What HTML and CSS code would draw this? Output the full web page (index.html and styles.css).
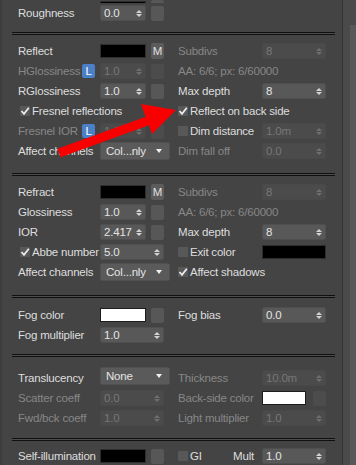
FILE: index.html
```html
<!DOCTYPE html>
<html lang="en">
<head>
    <meta charset="UTF-8">
    <meta name="viewport" content="width=device-width, initial-scale=1.0">
    <title>Material parameters</title>
    <link rel="stylesheet" href="styles.css">
</head>
<body>
    <div class="panel">
        <div class="row cut">
            <span></span>
            <div class="ctl"><span class="sw"></span><span class="sq"></span></div>
        </div>
        <div class="row">
            <span class="lbl">Roughness</span>
            <div class="ctl"><span class="spin"><span>0.0</span><i class="arr"></i></span><span class="sq"></span></div>
        </div>

        <div class="line"></div>

        <div class="sec reflect">
            <div class="row">
                <span class="lbl">Reflect</span>
                <div class="ctl"><span class="sw"></span><span class="btn-m">M</span></div>
                <span class="lbl off">Subdivs</span>
                <span class="spin wide off"><span>8</span><i class="arr"></i></span>
            </div>
            <div class="row">
                <span class="lbl off tag">HGlossiness<b class="badge">L</b></span>
                <div class="ctl"><span class="spin off"><span>1.0</span><i class="arr"></i></span><span class="sq off"></span></div>
                <span class="lbl off span-r">AA: 6/6; px: 6/60000</span>
            </div>
            <div class="row">
                <span class="lbl">RGlossiness</span>
                <div class="ctl"><span class="spin"><span>1.0</span><i class="arr"></i></span><span class="sq"></span></div>
                <span class="lbl">Max depth</span>
                <span class="spin wide"><span>8</span><i class="arr"></i></span>
            </div>
            <div class="row">
                <div class="check span-l"><span class="chk on"><svg viewBox="0 0 10 10"><path d="M1.5 5 L4 7.8 L8.8 1.8"/></svg></span><span>Fresnel reflections</span></div>
                <div class="check span-r"><span class="chk on"><svg viewBox="0 0 10 10"><path d="M1.5 5 L4 7.8 L8.8 1.8"/></svg></span><span>Reflect on back side</span></div>
            </div>
            <div class="row">
                <span class="lbl off tag">Fresnel IOR<b class="badge">L</b></span>
                <div class="ctl"><span class="spin off"><span>1.6</span><i class="arr"></i></span><span class="sq off"></span></div>
                <div class="check"><span class="chk"></span><span>Dim distance</span></div>
                <span class="spin wide off"><span>1.0m</span><i class="arr"></i></span>
            </div>
            <div class="row">
                <span class="lbl">Affect channels</span>
                <div class="ctl"><span class="drop"><span>Col...nly</span></span></div>
                <span class="lbl off">Dim fall off</span>
                <span class="spin wide off"><span>0.0</span><i class="arr"></i></span>
            </div>
        </div>

        <div class="line"></div>

        <div class="sec refract">
            <div class="row">
                <span class="lbl">Refract</span>
                <div class="ctl"><span class="sw"></span><span class="btn-m">M</span></div>
                <span class="lbl off">Subdivs</span>
                <span class="spin wide off"><span>8</span><i class="arr"></i></span>
            </div>
            <div class="row">
                <span class="lbl">Glossiness</span>
                <div class="ctl"><span class="spin"><span>1.0</span><i class="arr"></i></span><span class="sq"></span></div>
                <span class="lbl off span-r">AA: 6/6; px: 6/60000</span>
            </div>
            <div class="row">
                <span class="lbl">IOR</span>
                <div class="ctl"><span class="spin"><span>2.417</span><i class="arr"></i></span><span class="sq"></span></div>
                <span class="lbl">Max depth</span>
                <span class="spin wide"><span>8</span><i class="arr"></i></span>
            </div>
            <div class="row">
                <div class="check"><span class="chk on"><svg viewBox="0 0 10 10"><path d="M1.5 5 L4 7.8 L8.8 1.8"/></svg></span><span>Abbe number</span></div>
                <div class="ctl"><span class="spin wide"><span>5.0</span><i class="arr"></i></span></div>
                <div class="check"><span class="chk"></span><span>Exit color</span></div>
                <span class="sw wide"></span>
            </div>
            <div class="row">
                <span class="lbl">Affect channels</span>
                <div class="ctl"><span class="drop"><span>Col...nly</span></span></div>
                <div class="check span-r"><span class="chk on"><svg viewBox="0 0 10 10"><path d="M1.5 5 L4 7.8 L8.8 1.8"/></svg></span><span>Affect shadows</span></div>
            </div>
        </div>

        <div class="line"></div>

        <div class="sec fog">
            <div class="row">
                <span class="lbl">Fog color</span>
                <div class="ctl"><span class="sw white"></span><span class="sq"></span></div>
                <span class="lbl">Fog bias</span>
                <span class="spin wide"><span>0.0</span><i class="arr"></i></span>
            </div>
            <div class="row">
                <span class="lbl">Fog multiplier</span>
                <div class="ctl"><span class="spin wide"><span>1.0</span><i class="arr"></i></span></div>
            </div>
        </div>

        <div class="line"></div>

        <div class="sec transl">
            <div class="row">
                <span class="lbl">Translucency</span>
                <div class="ctl"><span class="drop up"><span>None</span></span></div>
                <span class="lbl off">Thickness</span>
                <span class="spin wide off"><span>10.0m</span><i class="arr"></i></span>
            </div>
            <div class="row">
                <span class="lbl off">Scatter coeff</span>
                <div class="ctl"><span class="spin wide off"><span>0.0</span><i class="arr"></i></span></div>
                <span class="lbl off">Back-side color</span>
                <div class="ctl wide-gap"><span class="sw white mid"></span><span class="sq off"></span></div>
            </div>
            <div class="row">
                <span class="lbl off">Fwd/bck coeff</span>
                <div class="ctl"><span class="spin wide off"><span>1.0</span><i class="arr"></i></span></div>
                <span class="lbl off">Light multiplier</span>
                <span class="spin wide off"><span>1.0</span><i class="arr"></i></span>
            </div>
        </div>

        <div class="line"></div>

        <div class="sec selfillum">
            <div class="row">
                <span class="lbl">Self-illumination</span>
                <div class="ctl"><span class="sw"></span><span class="sq"></span></div>
                <div class="check"><span class="chk"></span><span>GI</span><span class="mult">Mult</span></div>
                <span class="spin wide"><span>1.0</span><i class="arr"></i></span>
            </div>
        </div>
    </div>
    <div class="scroll"><div class="thumb"></div></div>

    <svg class="arrow" width="356" height="465" viewBox="0 0 356 465">
        <line x1="59" y1="153" x2="150" y2="120" stroke="#f80000" stroke-width="9"/>
        <polygon points="141,104 176,110 152,134" fill="#f80000"/>
    </svg>
</body>
</html>
```

FILE: styles.css
```css
* {
    margin: 0;
    padding: 0;
    box-sizing: border-box;
}
body {
    width: 356px;
    height: 465px;
    overflow: hidden;
    position: relative;
    display: flex;
    background-color: #444444;
    font-family: "Liberation Sans", Arial, sans-serif;
    font-size: 11.5px;
    letter-spacing: -0.2px;
    color: #dedede;
}
.panel {
    width: 342px;
    border-left: 2px solid #3d3d3d;
}
.scroll {
    flex: 1;
    display: flex;
    justify-content: flex-end;
    border-left: 1px solid #343434;
    background-color: #4a4a4a;
}
.thumb {
    width: 6px;
    margin-top: 25px;
    background-color: #585858;
}
.row {
    display: grid;
    grid-template-columns: 82px 78px 84px 64px;
    align-items: center;
    height: 20px;
    margin-left: 16px;
    white-space: nowrap;
}
.cut {
    height: 3px;
    overflow: hidden;
    align-items: end;
}
.line {
    width: 323px;
    height: 3px;
    margin: 9px 0 6px 10px;
    border-top: 1px solid #101010;
    border-bottom: 1px solid #101010;
    background-color: #4c4c4c;
}
.reflect {
    padding-bottom: 3px;
}
.refract {
    padding-bottom: 4px;
}
.fog {
    padding-top: 1px;
}
.transl {
    padding-top: 5px;
    padding-bottom: 1px;
}
.selfillum {
    margin-top: -1px;
}
.off {
    color: #878787;
}
.tag {
    display: flex;
    align-items: center;
}
.badge {
    display: flex;
    align-items: center;
    justify-content: center;
    width: 13px;
    height: 14px;
    margin-left: auto;
    margin-right: 5px;
    border-radius: 2px;
    background-color: #4b80c6;
    color: #ffffff;
    font-weight: normal;
}
.span-l {
    grid-column: 1 / 3;
}
.span-r {
    grid-column: 3 / 5;
}
.ctl {
    display: flex;
    align-items: center;
    gap: 5px;
}
.wide-gap {
    gap: 7px;
}
.spin {
    display: flex;
    align-items: center;
    justify-content: space-between;
    width: 46px;
    height: 16px;
    padding: 0 3px 0 3px;
    border: 1px solid #4f4f4f;
    border-radius: 2px;
    background-color: #585858;
    color: #e4e4e4;
}
.spin.wide {
    width: 64px;
}
.spin.off {
    border-color: #494949;
    background-color: #4b4b4b;
    color: #777777;
}
.arr {
    display: flex;
    flex-direction: column;
    gap: 1px;
}
.arr::before,
.arr::after {
    content: "";
    border-left: 3px solid transparent;
    border-right: 3px solid transparent;
}
.arr::before {
    border-bottom: 3px solid #d2d2d2;
}
.arr::after {
    border-top: 3px solid #d2d2d2;
}
.spin.off .arr::before {
    border-bottom-color: #6e6e6e;
}
.spin.off .arr::after {
    border-top-color: #6e6e6e;
}
.sq {
    width: 13px;
    height: 15px;
    border-radius: 2px;
    background-color: #575757;
}
.sq.off {
    background-color: #4c4c4c;
}
.sw {
    width: 46px;
    height: 14px;
    border: 1px solid #2e2e2e;
    background-color: #000000;
}
.sw.wide {
    width: 64px;
}
.sw.mid {
    width: 44px;
}
.sw.white {
    border-color: #1c1c1c;
    background-color: #ffffff;
}
.btn-m {
    display: flex;
    align-items: center;
    justify-content: center;
    width: 13px;
    height: 16px;
    border-radius: 2px;
    background-color: #5c5c5c;
    color: #e0e0e0;
}
.drop {
    display: flex;
    align-items: center;
    justify-content: space-between;
    width: 70px;
    height: 18px;
    padding: 0 7px 0 5px;
    border: 1px solid #505050;
    border-radius: 2px;
    background-color: #5a5a5a;
    color: #e4e4e4;
}
.drop::after {
    content: "";
    border-left: 3px solid transparent;
    border-right: 3px solid transparent;
    border-top: 4px solid #f0f0f0;
}
.drop.up {
    margin-top: -5px;
}
.check {
    display: flex;
    align-items: center;
    gap: 2px;
}
.span-l.check,
.row > .check:first-child {
    padding-left: 2px;
}
.chk {
    display: flex;
    width: 10px;
    height: 10px;
    background-color: #585858;
}
.chk svg {
    width: 10px;
    height: 10px;
}
.chk path {
    fill: none;
    stroke: #ececec;
    stroke-width: 1.8;
}
.mult {
    margin-left: auto;
    margin-right: 8px;
}
.arrow {
    position: absolute;
    left: 0;
    top: 0;
    pointer-events: none;
}
```
